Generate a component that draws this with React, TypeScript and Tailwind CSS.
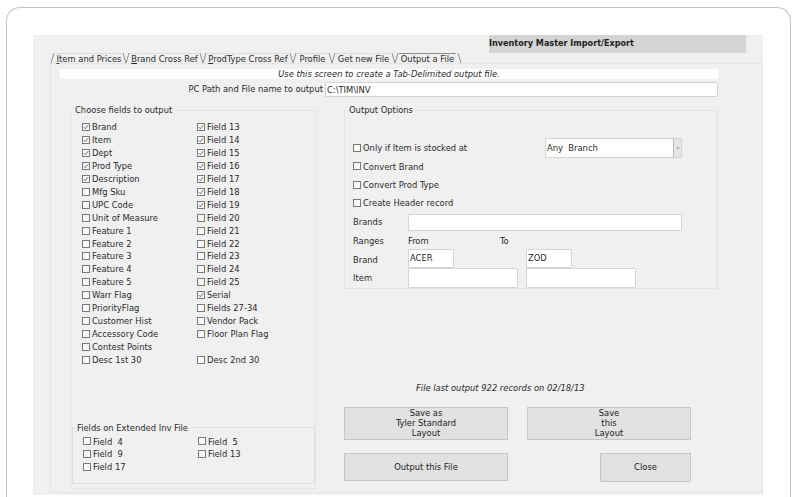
import React from 'react';

const leftCol: [string, boolean][] = [
  ['Brand', true], ['Item', true], ['Dept', true], ['Prod Type', true], ['Description', true],
  ['Mfg Sku', false], ['UPC Code', false], ['Unit of Measure', false], ['Feature 1', false],
  ['Feature 2', false], ['Feature 3', false], ['Feature 4', false], ['Feature 5', false],
  ['Warr Flag', false], ['PriorityFlag', false], ['Customer Hist', false], ['Accessory Code', false],
  ['Contest Points', false], ['Desc 1st 30', false],
];

const rightCol: [string, boolean][] = [
  ['Field 13', true], ['Field 14', true], ['Field 15', true], ['Field 16', true], ['Field 17', true],
  ['Field 18', true], ['Field 19', true], ['Field 20', false], ['Field 21', false], ['Field 22', false],
  ['Field 23', false], ['Field 24', false], ['Field 25', false], ['Serial', true], ['Fields 27-34', false],
  ['Vendor Pack', false], ['Floor Plan Flag', false], ['', false], ['Desc 2nd 30', false],
];

const Check = ({ label, checked = false }: { label: string; checked?: boolean }) => {
  if (!label) return <div className="h-[12.94px]" />;
  return (
    <div className="flex items-center h-[12.94px] gap-[2px] whitespace-pre">
      <svg width="8" height="8" viewBox="0 0 8 8" className="shrink-0">
        <rect x="0.5" y="0.5" width="7" height="7" fill="#f8f8f8" stroke="#7a7a7a" />
        {checked && <path d="M1.8 4.2 L3.3 5.7 L6.2 2.2" fill="none" stroke="#555" strokeWidth="0.9" />}
      </svg>
      <span>{label}</span>
    </div>
  );
};

const Tab = ({ u, rest, w, active }: { u: string; rest: string; w: string; active?: boolean }) => (
  <div className={`${w} h-[10px] flex items-center justify-center whitespace-pre border-t ${active ? 'border-[#8a8a8a]' : 'border-[#dcdcdc]'}`}>
    <span>
      <span className="underline">{u}</span>
      {rest}
    </span>
  </div>
);

const Slash = ({ d = 'M1 0 L4 10 L7 0' }: { d?: string }) => (
  <svg width="8" height="10" viewBox="0 0 8 10" className="shrink-0">
    <path d={d} fill="none" stroke="#777" strokeWidth="0.8" />
  </svg>
);

const Input = ({ className, value }: { className: string; value?: string }) => (
  <div className={`${className} bg-white border border-[#d4d4d4] rounded-[1px] flex items-center pl-[1px]`}>{value}</div>
);

const Btn = ({ className, lines }: { className: string; lines: string[] }) => (
  <div className={`${className} bg-[#e1e1e1] border border-[#c6c6c6] pb-[1px] flex flex-col items-center justify-center text-center leading-[9.7px] text-[#222]`}>
    {lines.map((l) => (
      <span key={l}>{l}</span>
    ))}
  </div>
);

export default function App() {
  return (
    <div className="w-[800px] h-[497px] overflow-hidden bg-white pt-[7px] pl-[6px] pr-[9px] text-[9.3px] text-[#2a2a2a]" style={{ fontFamily: '"DejaVu Sans Condensed", "DejaVu Sans", sans-serif' }}>
      <div className="h-[520px] border-x border-t border-[#c4c4c4] rounded-t-[14px] pt-[27px] pl-[26px] pr-[27px]">
        <div className="h-[460px] bg-[#f0f0f0]">
          {/* title bar */}
          <div className="h-[18px] pl-[456px] pr-[17px]">
            <div className="h-full bg-[#d4d4d4] flex items-center font-bold text-[9px] text-[#222] whitespace-pre">Inventory Master Import/Export</div>
          </div>

          {/* tabs */}
          <div className="pl-[15px] h-[10px] flex items-end">
            <Slash d="M3 10 L6 0" />
            <Tab u="I" rest="tem and Prices" w="w-[66px]" />
            <Slash />
            <Tab u="B" rest="rand Cross Ref" w="w-[69px]" />
            <Slash />
            <Tab u="P" rest="rodType Cross Ref" w="w-[82px]" />
            <Slash />
            <Tab u="" rest="Profile" w="w-[31px]" />
            <Slash />
            <Tab u="" rest="Get new File" w="w-[55px]" />
            <Slash />
            <Tab u="" rest="Output a File" w="w-[57px]" active />
            <Slash d="M2 0 L5 10" />
          </div>

          {/* tab panel */}
          <div className="ml-[17px] h-[430px] border border-[#e6e6e6] pt-[5px] pl-[9px]">
            <div className="w-[658px] h-[10px] bg-white flex items-center justify-center italic">Use this screen to create a Tab-Delimited output file.</div>
            <div className="w-[658px] mt-[3px] h-[15px] flex items-center">
              <div className="w-[263px] text-right pb-[1px]">PC Path and File name to output</div>
              <Input className="ml-[2px] flex-1 h-[15px]" value="C:\TIM\INV" />
            </div>

            <div className="flex mt-[9px] items-start">
              {/* left group */}
              <fieldset className="ml-[10px] w-[246px] h-[384px] border border-[#e4e4e4] pl-[11px] -mt-[1px] flex flex-col">
                <legend className="ml-[-10px] px-[3px] h-[11px] leading-[10px]">Choose fields to output</legend>
                <div className="flex mt-[4.6px]">
                  <div className="w-[115px]">
                    {leftCol.map(([l, c]) => <Check key={l} label={l} checked={c} />)}
                  </div>
                  <div>
                    {rightCol.map(([l, c], i) => <Check key={i} label={l} checked={c} />)}
                  </div>
                </div>
                <fieldset className="mt-auto mb-[4px] -ml-[10px] w-[243px] h-[62px] border border-[#dedede] pl-[10px]">
                  <legend className="ml-[-9px] px-[3px] h-[11px] leading-[11px]">Fields on Extended Inv File</legend>
                  <div className="flex mt-[2px]">
                    <div className="w-[115px]">
                      <Check label="Field  4" />
                      <Check label="Field  9" />
                      <Check label="Field 17" />
                    </div>
                    <div>
                      <Check label="Field  5" />
                      <Check label="Field 13" />
                    </div>
                  </div>
                </fieldset>
              </fieldset>

              {/* right side */}
              <div className="ml-[28px] w-[374px] -mt-[1px]">
                <fieldset className="h-[184px] border border-[#e4e4e4] pl-[8px] flex flex-col">
                  <legend className="ml-[-7px] px-[3px] h-[11px] leading-[10px]">Output Options</legend>
                  <div className="flex items-center mt-[22px] h-[20px]">
                    <div className="w-[192px]"><Check label="Only if Item is stocked at" /></div>
                    <div className="w-[137px] h-[20px] bg-white border border-[#d4d4d4] flex items-center justify-between pl-[1px] whitespace-pre">
                      <span>Any  Branch</span>
                      <div className="w-[8px] h-full bg-[#e6e6e6] border-l border-[#bbb] flex items-center justify-center">
                        <svg width="4" height="3" viewBox="0 0 4 3">
                          <path d="M0.5 0.5 L2 2 L3.5 0.5" fill="none" stroke="#666" strokeWidth="0.7" />
                        </svg>
                      </div>
                    </div>
                  </div>
                  <div className="mt-[2px]"><Check label="Convert Brand" /></div>
                  <div className="mt-[6px]"><Check label="Convert Prod Type" /></div>
                  <div className="mt-[5px]"><Check label="Create Header record" /></div>
                  <div className="flex items-center mt-[4px]">
                    <span className="w-[55px]">Brands</span>
                    <Input className="w-[274px] h-[17px]" />
                  </div>
                  <div className="flex items-center mt-[3px] h-[15px]">
                    <span className="w-[55px]">Ranges</span>
                    <span className="w-[92px]">From</span>
                    <span>To</span>
                  </div>
                  <div className="flex items-end h-[18px] mt-[1px]">
                    <span className="w-[55px] mb-[1px]">Brand</span>
                    <Input className="w-[46px] h-[19px]" value="ACER" />
                    <Input className="ml-[72px] w-[46px] h-[19px]" value="ZOD" />
                  </div>
                  <div className="flex items-center h-[20px]">
                    <span className="w-[55px]">Item</span>
                    <Input className="w-[110px] h-[20px]" />
                    <Input className="ml-[8px] w-[110px] h-[20px]" />
                  </div>
                </fieldset>

                <div className="mt-[94px] pl-[72px] h-[10px] flex items-center italic">File last output 922 records on 02/18/13</div>
                <div className="flex mt-[14px]">
                  <Btn className="w-[164px] h-[33px]" lines={['Save as', 'Tyler Standard', 'Layout']} />
                  <Btn className="ml-[19px] w-[164px] h-[33px]" lines={['Save', 'this', 'Layout']} />
                </div>
                <div className="flex mt-[13px]">
                  <Btn className="w-[164px] h-[28px]" lines={['Output this File']} />
                  <Btn className="ml-[92px] w-[91px] h-[29px]" lines={['Close']} />
                </div>
              </div>
            </div>
          </div>
        </div>
      </div>
    </div>
  );
}
